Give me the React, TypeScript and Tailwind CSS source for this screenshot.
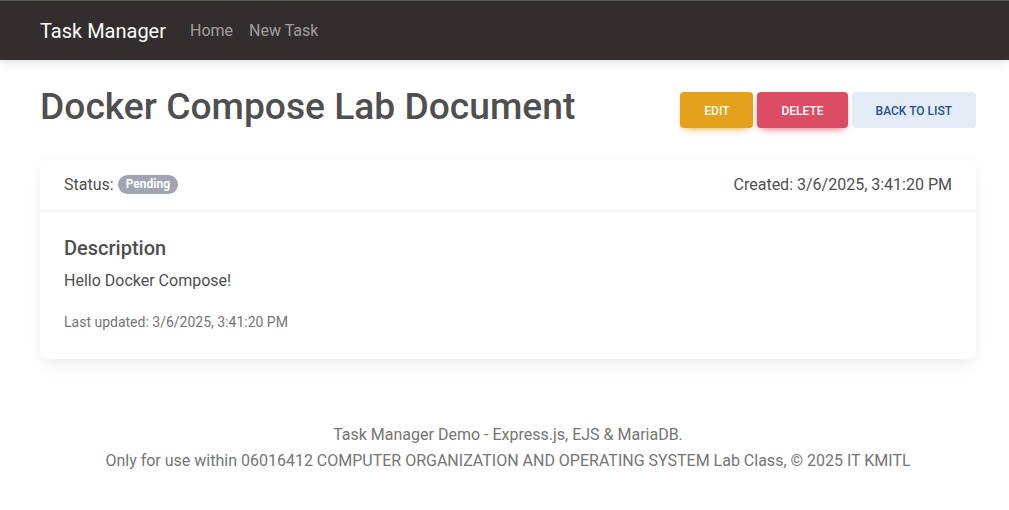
import React from "react";

export default function App() {
  return (
    <div className="min-h-[510px] bg-white font-['Roboto',sans-serif] text-[#4f4f4f]">
      <nav className="relative z-10 h-[60px] border-t border-[#5a5a5a] bg-[#332d2d] shadow-[0_4px_12px_0_rgba(0,0,0,0.07),0_2px_4px_rgba(0,0,0,0.05)]">
        <div className="flex h-full items-center px-[40px]">
          <span className="mr-[16px] text-[20px] leading-[30px] text-white">Task Manager</span>
          <a className="px-[8px] text-[16px] leading-[24px] text-[rgba(255,255,255,0.55)]">Home</a>
          <a className="px-[8px] text-[16px] leading-[24px] text-[rgba(255,255,255,0.55)]">New Task</a>
        </div>
      </nav>

      <div className="pl-[40px] pr-[33px]">
        <main className="pt-[24px]">
          <div className="flex items-start justify-between">
            <h1 className="text-[37.2px] font-medium leading-[44.6px] text-[#4f4f4f]">Docker Compose Lab Document</h1>
            <div className="mt-[8px] flex gap-[4px]">
              <button className="h-[36px] rounded-[4px] bg-[#e4a11b] px-[24px] pt-[1px] text-[12px] font-medium uppercase leading-[18px] text-white shadow-[0_4px_9px_-4px_#e4a11b]">
                Edit
              </button>
              <button className="h-[36px] rounded-[4px] bg-[#dc4c64] px-[24px] pt-[1px] text-[12px] font-medium uppercase leading-[18px] text-white shadow-[0_4px_9px_-4px_#dc4c64]">
                Delete
              </button>
              <button className="h-[36px] rounded-[4px] bg-[#e3ebf7] px-[24px] pt-[1px] text-[12px] font-medium uppercase leading-[18px] text-[#285192]">
                Back to List
              </button>
            </div>
          </div>

          <div className="mt-[31px] rounded-[8px] bg-white shadow-[0_2px_15px_-3px_rgba(0,0,0,0.07),0_10px_20px_-2px_rgba(0,0,0,0.04)]">
            <div className="flex h-[52.6px] items-center justify-between border-b-2 border-[#f5f5f5] px-[24px] text-[16px] leading-[25.6px]">
              <div className="flex items-center">
                <span>Status:</span>
                <span className="ml-[4px] rounded-full bg-[#9fa6b2] px-[8px] pb-[4px] pt-[3px] text-[12px] font-bold leading-[12px] text-white">
                  Pending
                </span>
              </div>
              <span>Created: 3/6/2025, 3:41:20 PM</span>
            </div>
            <div className="p-[24px]">
              <h5 className="mb-[8px] text-[20px] font-medium leading-[24px]">Description</h5>
              <p className="mb-[16px] text-[16px] leading-[25.6px]">Hello Docker Compose!</p>
              <p className="text-[14px] leading-[25.6px] text-[#757575]">Last updated: 3/6/2025, 3:41:20 PM</p>
            </div>
          </div>
        </main>

        <footer className="mt-[63px] text-center text-[16px] leading-[25.6px] text-[#757575]">
          <p>Task Manager Demo - Express.js, EJS &amp; MariaDB.</p>
          <p>Only for use within 06016412 COMPUTER ORGANIZATION AND OPERATING SYSTEM Lab Class, © 2025 IT KMITL</p>
        </footer>
      </div>
    </div>
  );
}
